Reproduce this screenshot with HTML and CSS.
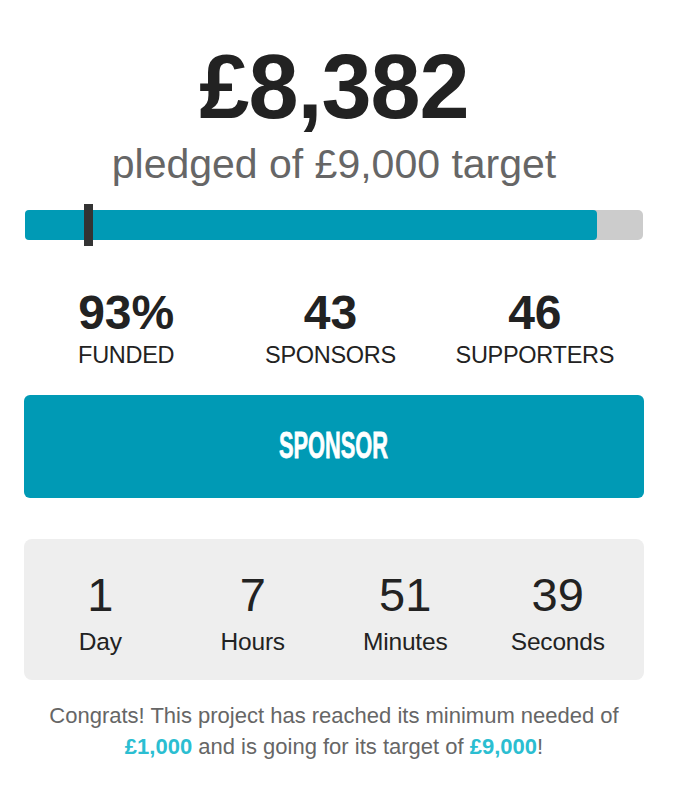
FILE: index.html
```html
<!DOCTYPE html>
<html lang="en">
<head>
  <meta charset="UTF-8" />
  <meta name="viewport" content="width=device-width, initial-scale=1.0"/>
  <title>Project Funding</title>
  <link rel="stylesheet" href="styles.css">
</head>
<body>

  <div class="card">
    <h1 class="pledged">£8,382</h1>
    <p class="target">pledged of £9,000 target</p>

    <div class="progress">
      <div class="progress-fill" style="width: 92.6%"></div>
      <span class="progress-marker"></span>
    </div>

    <div class="stats">
      <div class="stat">
        <div class="stat-num">93%</div>
        <div class="stat-label">FUNDED</div>
      </div>
      <div class="stat">
        <div class="stat-num">43</div>
        <div class="stat-label">SPONSORS</div>
      </div>
      <div class="stat">
        <div class="stat-num">46</div>
        <div class="stat-label">SUPPORTERS</div>
      </div>
    </div>

    <button class="sponsor-btn"><span>SPONSOR</span></button>

    <div class="countdown">
      <div class="unit">
        <div class="unit-num">1</div>
        <div class="unit-label">Day</div>
      </div>
      <div class="unit">
        <div class="unit-num">7</div>
        <div class="unit-label">Hours</div>
      </div>
      <div class="unit">
        <div class="unit-num">51</div>
        <div class="unit-label">Minutes</div>
      </div>
      <div class="unit">
        <div class="unit-num">39</div>
        <div class="unit-label">Seconds</div>
      </div>
    </div>

    <p class="note">Congrats! This project has reached its minimum needed of <strong>£1,000</strong> and is going for its target of <strong>£9,000</strong>!</p>
  </div>

</body>
</html>
```

FILE: styles.css
```css
* { box-sizing: border-box; }
body {
  font-family: 'Liberation Sans', Arial, sans-serif;
  background: #fff;
  margin: 0;
  color: #222;
}

.card {
  width: 620px;
  margin-left: 24px;
  padding-top: 42px;
  text-align: center;
}

.pledged {
  margin: 0;
  font-size: 90px;
  line-height: 1;
  font-weight: 700;
  color: #222;
  letter-spacing: -1px;
}

.target {
  margin: 12px 0 0;
  font-size: 41px;
  line-height: 1;
  color: #666;
}

.progress {
  position: relative;
  margin: 25px 0 0 1px;
  width: 618px;
  height: 30px;
  background: #ccc;
  border-radius: 5px;
}

.progress-fill {
  height: 100%;
  background: #009ab5;
  border-radius: 4px;
}

.progress-marker {
  position: absolute;
  left: 59px;
  top: -6px;
  width: 9px;
  height: 42px;
  background: #333;
}

.stats {
  display: grid;
  grid-template-columns: repeat(3, 1fr);
  margin-top: 49px;
  padding-right: 7px;
}

.stat-num {
  font-size: 48px;
  line-height: 1;
  font-weight: 700;
}

.stat-label {
  margin-top: 7px;
  font-size: 23.5px;
  line-height: 1;
  letter-spacing: -0.3px;
}

.sponsor-btn {
  display: block;
  width: 100%;
  height: 103px;
  margin-top: 27px;
  background: #009ab5;
  border: none;
  border-radius: 6px;
  color: #fff;
  cursor: pointer;
  font-family: 'Liberation Sans', Arial, sans-serif;
  font-size: 37px;
  font-weight: 700;
}

.sponsor-btn span {
  display: inline-block;
  transform: scaleX(0.59);
  -webkit-text-stroke: 0.8px #fff;
}

.countdown {
  display: grid;
  grid-template-columns: repeat(4, 1fr);
  margin-top: 41px;
  padding: 32px 10px 26px 0;
  background: #eee;
  border-radius: 8px;
}

.unit-num {
  font-size: 47px;
  line-height: 1;
  color: #222;
}

.unit-label {
  margin-top: 12px;
  font-size: 24.5px;
  line-height: 1;
  color: #222;
  letter-spacing: -0.2px;
}

.note {
  margin: 20px 0 0;
  font-size: 22px;
  line-height: 31px;
  color: #666;
}

.note strong { color: #2bbed1; }
```
